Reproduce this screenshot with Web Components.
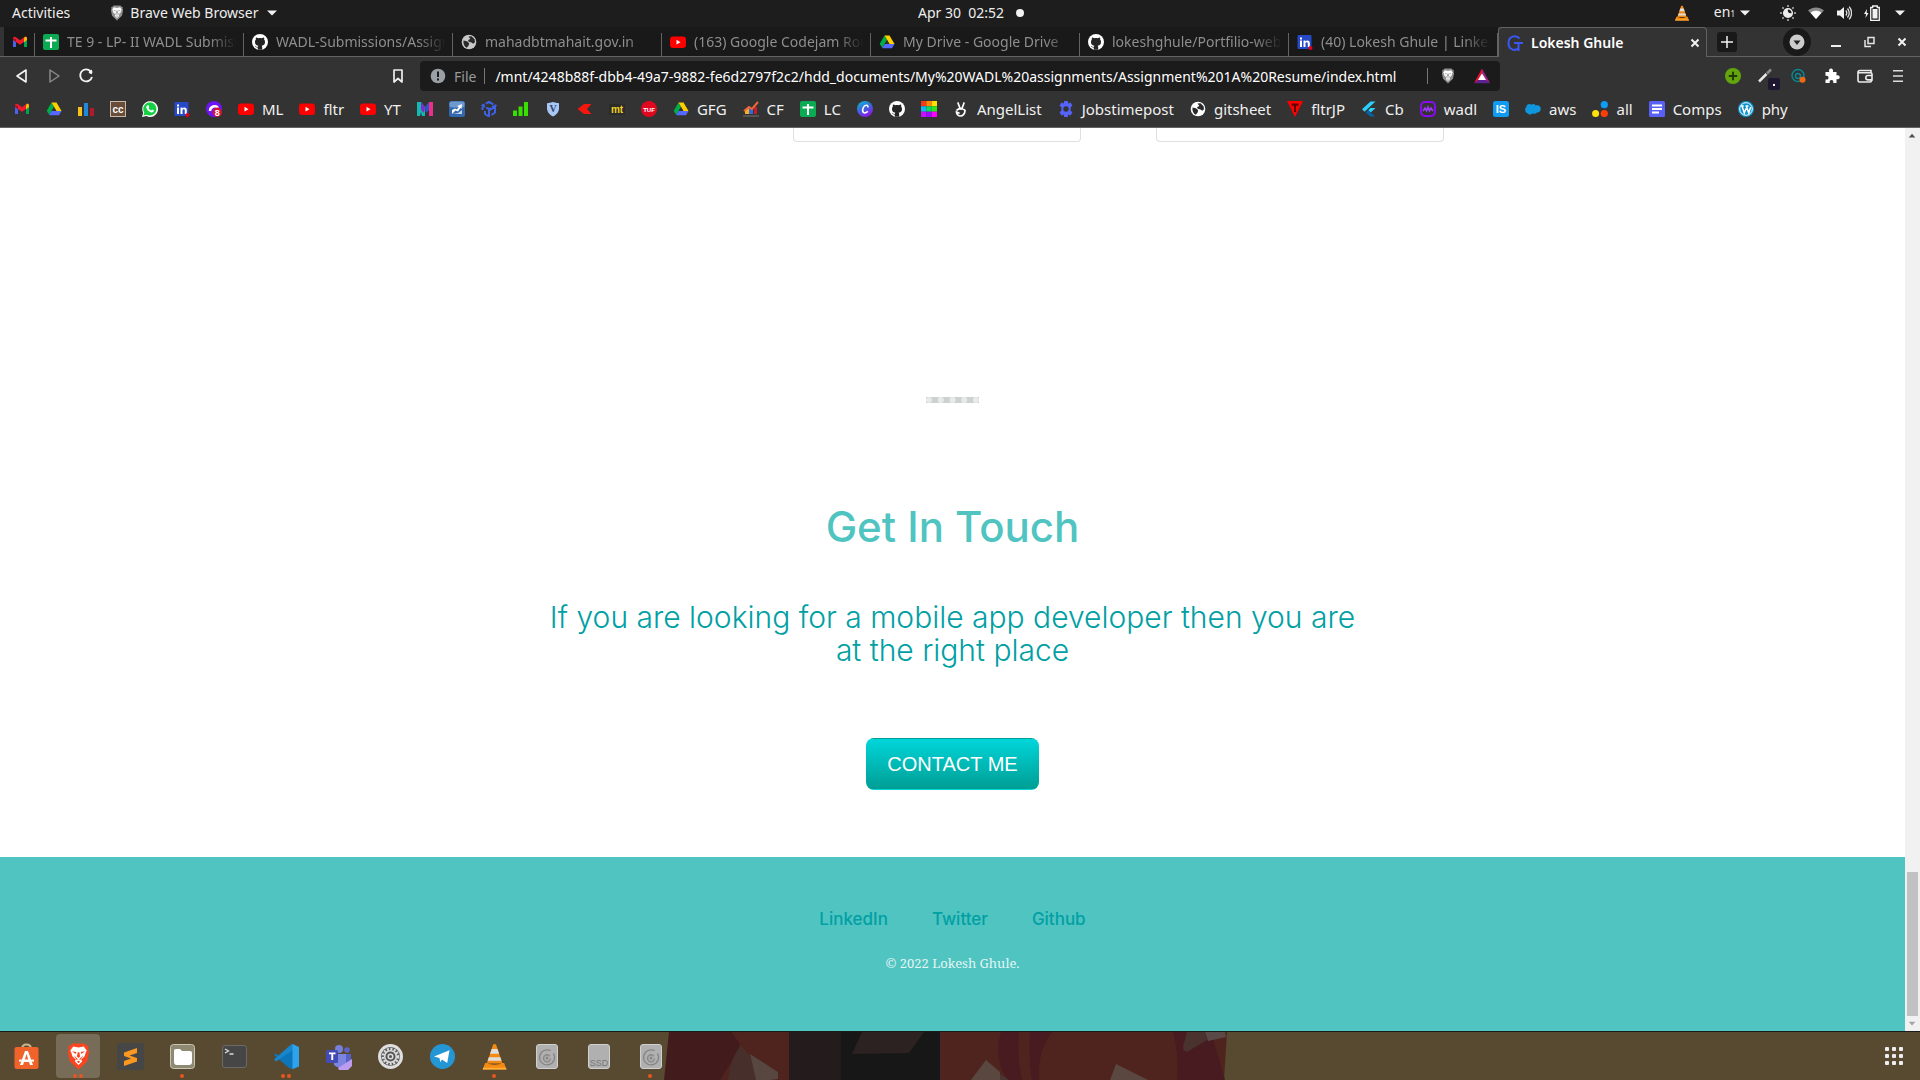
<!DOCTYPE html>
<html lang="en">
<head>
<meta charset="utf-8">
<title>Lokesh Ghule</title>
<style>
html,body{height:100%;margin:0}
body{display:flex;flex-direction:column;overflow:hidden;background:#333;font-family:"Noto Sans","Open Sans",sans-serif}
page-view{flex:1;min-height:0}
</style>
</head>
<body>
<system-bar></system-bar>
<tab-strip>
  <browser-tab icon="gmail" pinned></browser-tab>
  <browser-tab icon="sheets">TE 9 - LP- II WADL Submissions</browser-tab>
  <browser-tab icon="github">WADL-Submissions/Assignments</browser-tab>
  <browser-tab icon="globegray">mahadbtmahait.gov.in</browser-tab>
  <browser-tab icon="youtube">(163) Google Codejam Round</browser-tab>
  <browser-tab icon="drive">My Drive - Google Drive</browser-tab>
  <browser-tab icon="github">lokeshghule/Portfilio-website</browser-tab>
  <browser-tab icon="linkedin">(40) Lokesh Ghule | LinkedIn</browser-tab>
  <browser-tab icon="gee" active>Lokesh Ghule</browser-tab>
</tab-strip>
<tool-bar></tool-bar>
<bookmark-bar>
  <bookmark-item icon="gmail"></bookmark-item>
  <bookmark-item icon="drive"></bookmark-item>
  <bookmark-item icon="bars"></bookmark-item>
  <bookmark-item icon="cc"></bookmark-item>
  <bookmark-item icon="whatsapp"></bookmark-item>
  <bookmark-item icon="linkedin"></bookmark-item>
  <bookmark-item icon="purple"></bookmark-item>
  <bookmark-item icon="youtube">ML</bookmark-item>
  <bookmark-item icon="youtube">fltr</bookmark-item>
  <bookmark-item icon="youtube">YT</bookmark-item>
  <bookmark-item icon="emm"></bookmark-item>
  <bookmark-item icon="trend"></bookmark-item>
  <bookmark-item icon="cube"></bookmark-item>
  <bookmark-item icon="signal"></bookmark-item>
  <bookmark-item icon="shieldv"></bookmark-item>
  <bookmark-item icon="kite"></bookmark-item>
  <bookmark-item icon="mt"></bookmark-item>
  <bookmark-item icon="tuf"></bookmark-item>
  <bookmark-item icon="drive">GFG</bookmark-item>
  <bookmark-item icon="chart">CF</bookmark-item>
  <bookmark-item icon="sheets">LC</bookmark-item>
  <bookmark-item icon="canva"></bookmark-item>
  <bookmark-item icon="github"></bookmark-item>
  <bookmark-item icon="swatch"></bookmark-item>
  <bookmark-item icon="angel">AngelList</bookmark-item>
  <bookmark-item icon="gear">Jobstimepost</bookmark-item>
  <bookmark-item icon="globe">gitsheet</bookmark-item>
  <bookmark-item icon="tee">fltrJP</bookmark-item>
  <bookmark-item icon="flutter">Cb</bookmark-item>
  <bookmark-item icon="wave">wadl</bookmark-item>
  <bookmark-item icon="is"></bookmark-item>
  <bookmark-item icon="cloud">aws</bookmark-item>
  <bookmark-item icon="dots">all</bookmark-item>
  <bookmark-item icon="form">Comps</bookmark-item>
  <bookmark-item icon="wordpress">phy</bookmark-item>
</bookmark-bar>
<page-view></page-view>
<app-dock></app-dock>

<script>
const LION = (body, face) => `<path fill="${body}" d="M4.500 .5h7l1 1.200 1.300.2-.2 2 .5 1.600-1.200 5.300L8 15.600 3.100 10.800 1.900 5.500l.5-1.600-.2-2 1.300-.2z"/><path fill="${face}" d="M5 2.300 8 2.900l3-.6 1.700 2.200-.6 1.300-.6 2-2 1.900.6 1.200L8 12.900 5.900 10.900l.6-1.200-2-1.900-.6-2-.6-1.300z"/><path fill="${body}" d="M4.300 5l2.500.4L6.300 6.600zM11.700 5l-2.500.4.5 1.200zM7.500 5.500h1L8.900 8 8 8.900 7.100 8zM5.200 7.300 7.700 9.500 7 10zM10.800 7.300 8.300 9.500 9 10zM6.900 11 8 10.400l1.100.6L8 11.700z"/>`;
const GLOBE = c => `<circle cx="8" cy="8" r="7.300" fill="${c}"/><path fill="#2a2a2a" d="M2.500 6.500 6 7.300l2.200 2-.6 2.200-1.800 2.300C3.500 12.800 2 10 2.500 6.500zM7.500 2.500l3-.3L13.600 5.200l.4 3-1.800 1.600-1.700-1.300-2.800-.8-.6-1.800 2.300-.8z"/>`;
const CONE = `<path fill="#f58a12" d="M7.200.8h1.600L12.600 12H3.400z"/><path fill="#ddd" d="M6.300 3.600h3.400l1 2.700H5.300zM4.600 8.400h6.800l.7 2.100H3.900z"/><path fill="#f58a12" d="M2.400 11.800h1.400c1 1.300 7.400 1.300 8.400 0h1.400L15 15.600H1z"/><path fill="#ffb03a" d="M1.200 14.600h13.600l.2 1H1z"/>`;
const DISK = `<rect x=".5" y=".5" width="21" height="24" rx="2.500" fill="#b0b0b0" stroke="#d0d0d0"/>`;
const RINGS = `<g fill="none" stroke="#868686" stroke-width="1.300"><path d="M17.500 9.500a7.500 7.500 0 1 1-3-2.800M14.500 14.500a3.500 3.500 0 1 1-.6-2.200"/></g><circle cx="11" cy="14" r="1.500" fill="#868686"/>`;
const T = 'font-family="Liberation Sans,sans-serif" text-anchor="middle"';
const ICONS = {
gmail:`<path fill="#4a62ea" d="M1 4v9h3V6z"/><path fill="#00a651" d="M15 4v9h-3V6z"/><path fill="#f01b2d" d="M1 4.500C1 2.500 3 2.300 4 3.200l4 3 4-3c1-.9 3-.7 3 1.300L12 8 8 10.800 4 8z"/><path fill="#a80f23" d="M1 4.500V6l3 2.200V5z"/><path fill="#fcbc05" d="M12 5l.6-2c1-.7 2.400 0 2.400 1.500V6l-3 2.200z"/>`,
drive:`<path fill="#00ac47" d="M5.500 1.500 8 5.700 3.300 14 .7 9.800z"/><path fill="#ffcf00" d="M5.500 1.500h5l5 8.500h-5z"/><path fill="#5568ff" d="M5.600 10h9.900L13 14.200H3.200z"/><path fill="#333" d="M8 6.300 10 9.800H6z"/>`,
bars:`<rect x="0" y="6" width="4" height="9" fill="#f5c21b"/><rect x="6" y="2" width="4" height="13" fill="#2388d8"/><rect x="12" y="7" width="4" height="8" fill="#b21a2b"/>`,
cc:`<rect x=".5" y=".5" width="15" height="15" fill="#6a4d38" stroke="#cbb7a4"/><text ${T} x="8" y="11.500" font-size="10" font-weight="bold" fill="#fff">cc</text>`,
whatsapp:`<path fill="#fff" d="M0 16 1.200 11.800A7.900 7.900 0 1 1 4.400 15z"/><path fill="#12cf43" d="M1.400 14.600l.9-3A6.600 6.600 0 1 1 4.700 13.800z"/><path fill="#fff" d="M5.300 4.200h1.200l.8 1.900-.7.9c.5 1.100 1.300 1.800 2.500 2.400l.9-1 1.800.9c.2 1.400-.9 2.200-2.100 2.200C7 11.200 4.600 8.800 4.300 6.300c0-.8.300-1.600 1-2.100z"/>`,
linkedin:`<rect x=".5" y="1" width="14" height="14" rx="1" fill="#2649c7"/><path fill="#fff" d="M3 6.500h2V13H3zM3 3.500h2v2H3zM6.500 6.500h1.900v.9c1-1.500 4.400-1.500 4.400 1.600v4h-2V9.500c0-1.600-2.300-1.600-2.300 0V13h-2z"/><circle cx="13.500" cy="14" r="2" fill="#e3001b"/>`,
purple:`<circle cx="8" cy="8" r="8" fill="#6d15f2"/><path d="M4 10c0-5 6-6 8-3" fill="none" stroke="#fff" stroke-width="2.500"/><circle cx="11.300" cy="11.300" r="4.700" fill="#d8122f"/><text ${T} x="11.300" y="14.600" font-size="9" font-weight="bold" fill="#fff">8</text>`,
youtube:`<rect x="0" y="2.500" width="16" height="11.500" rx="3" fill="#f00"/><path fill="#fff" d="M6.500 5.800 10.500 8.200 6.500 10.600z"/>`,
emm:`<path fill="#14b8b2" d="M0 1h4l4 5v9H5l-1-4-1 4H0z"/><path fill="#8129c9" d="M4 1 8 6l-1 6-3-3z"/><path fill="#2f55c9" d="M8 6l4-5v8l-3 3z"/><path fill="#ef2d8b" d="M12 1h4v14h-4z"/>`,
trend:`<rect width="16" height="16" rx="2.500" fill="#3468ad"/><rect x=".5" y=".5" width="15" height="6" rx="2" fill="#6c99d0"/><path fill="#fff" d="M3 13V9l3-1.500 1.800 1 2-2.500-1.600-1L13 3l-.5 5-1.200-1L9 10.500 6.500 9.500z"/><path fill="#fff" opacity=".7" d="M4 13h9V9l-4 3z"/>`,
cube:`<g fill="none" stroke="#3e62e4" stroke-width="2"><path d="M8 .8 14.500 4.500 8 8 1.500 4.500z" stroke-dasharray="5 1.500"/><path d="M1.500 6v3M4 10v3l4 2.500V9.500l6-3.500v5.500L10.500 14"/></g>`,
signal:`<path fill="#38e000" d="M0 9.500h4V15H0zM5.500 5.500h4V15h-4zM11 1h4v14h-4z"/>`,
shieldv:`<path fill="#a9c7f6" d="M2 2.200Q5 2 8 1q3 1 6 1.200v6Q13 13 8 15.500 3 13 2 8.200z"/><text font-family="Liberation Serif,serif" text-anchor="middle" x="8" y="11" font-size="10" font-weight="bold" fill="#31456c">V</text>`,
kite:`<path fill="#f3170d" d="M.5 8 7 3h7.500L10 8l4.500 5H7z"/>`,
mt:`<rect y="3" width="16" height="11" fill="#2b2b2b"/><text ${T} x="8" y="11.500" font-size="10" font-weight="bold" fill="#f2d21f">mt</text>`,
tuf:`<circle cx="8" cy="8" r="8" fill="#e1071f"/><text ${T} x="8" y="10.500" font-size="6" font-weight="bold" fill="#fff">TUF</text>`,
chart:`<path fill="#f3b21d" d="M2 9l4-2v6H2z"/><path fill="#3767d6" d="M6 7h4v6H6z"/><path fill="#c21e2a" d="M11 6h3v7h-3z"/><path d="M1 10 6 6l3 2 6-7" fill="none" stroke="#f0643c" stroke-width="2"/><path stroke="#777" d="M0 15h16"/>`,
sheets:`<rect width="16" height="16" rx="2" fill="#0bab53"/><path fill="#fff" d="M2.500 5.500H7V3h2v2.500h4.500v2H9V14H7V7.500H2.500z"/>`,
canva:`<defs><linearGradient id="a" x1="0" y1="0" x2=".5" y2="1"><stop stop-color="#05c3d2"/><stop offset=".55" stop-color="#3b65dd"/><stop offset="1" stop-color="#8b1be8"/></linearGradient></defs><circle cx="8" cy="8" r="8" fill="url(#a)"/><path d="M10.800 6.600c1-3-3-3.600-4.600.2-1.800 4.200.8 6.800 4.600 3.600" fill="none" stroke="#fff" stroke-width="1.500"/>`,
github:`<circle cx="8" cy="8" r="8" fill="#fff"/><path fill="#242424" d="M5.800 15.700v-2.300c-2 .4-2.500-.9-3-1.600.9 0 1.300 1.200 2.300 1.100l.8-.1.400-1C3.900 11.500 3 10 3 8c0-1 .3-1.700.9-2.400-.2-.7-.2-1.500.1-2.200.9 0 1.600.5 2.200.9 1.100-.3 2.400-.3 3.600 0 .6-.4 1.300-.9 2.200-.9.3.7.3 1.500.1 2.200.6.700.9 1.400.9 2.400 0 2-.9 3.500-3.300 3.800.4.400.5 1 .5 1.600v2.300z"/>`,
swatch:`<path fill="#f33b1c" d="M0 0h5.300v5.300H0z"/><path fill="#f80" d="M5.300 0h5.400v5.300H5.300z"/><path fill="#ffe000" d="M10.700 0H16v5.300h-5.300z"/><path fill="#11b7f5" d="M0 5.300h5.300v5.400H0z"/><path fill="#0bd968" d="M5.300 5.300h5.400v5.400H5.300z"/><path fill="#2fe81c" d="M10.700 5.300H16v5.400h-5.300z"/><path fill="#c610ff" d="M0 10.700h5.300V16H0z"/><path fill="#9a0bff" d="M5.300 10.700h5.400V16H5.300z"/><path fill="#f0f" d="M10.700 10.700H16V16h-5.300z"/>`,
angel:`<path fill="none" stroke="#fff" stroke-width="1.700" stroke-linecap="round" d="M5 2l2.300 6M11 2 8.800 8M4 9c3-2 7-1.500 8 .5 0 3-2 5.500-4.500 5.500C5 15 3.500 13 3.500 11L6 12"/>`,
gear:`<path fill="#5663fb" d="M6.200 0h3.600l.5 2.400 2.300-.8 1.800 3.100L12.600 6.300v3.400l1.800 1.600-1.800 3.100-2.300-.8-.5 2.400H6.200l-.5-2.400-2.300.8-1.800-3.100 1.800-1.600V6.300L1.600 4.700l1.800-3.100 2.300.8z"/><circle cx="8" cy="8" r="2.700" fill="#333"/>`,
globe:GLOBE('#fff'), globegray:GLOBE('#c9c9c9'),
tee:`<path fill="#f00" d="M0 0h16L8 16z"/><path fill="#5c0000" d="M4.500 2.500h7v2.300H9V11H7V4.800H4.500z"/>`,
flutter:`<path fill="#2ad0fb" d="M9.500.5h5L3.600 10.800 1 8.300zM9.600 7h4.900L9.700 11.600 7.200 9.200z"/><path fill="#0a62a6" d="M7.200 9.200 4.800 11.600l4.300 4h5L9.700 11.600z"/>`,
wave:`<rect x="1" y="1" width="14" height="14" rx="4" fill="none" stroke="#8a09f4" stroke-width="2"/><path d="M3 10l2-3 1.500 3L8 6l1.500 4L11 7l2 3" fill="none" stroke="#a43bff" stroke-width="1.500"/>`,
is:`<rect width="16" height="16" rx="2.500" fill="#0f9bf2"/><text ${T} x="8" y="12" font-size="11" font-weight="bold" fill="#fff">IS</text>`,
cloud:`<path fill="#0e97dd" d="M3 12.500C-.5 11.500-.5 7 1.500 6 1 3.500 4.500 2 6.500 3.800 8 2.500 10 3 10.600 4.500c3-1 5.200 1 5.200 3.300 0 2.600-2 3.900-4 3.600-1 1.700-3.300 1.700-4.200.8-1.600 1.800-4 1.500-4.600.3z"/>`,
dots:`<circle cx="12.300" cy="3.700" r="3.600" fill="#0c9cf8"/><circle cx="3.600" cy="12.500" r="3.500" fill="#ffe20a"/><circle cx="12.300" cy="12.500" r="3.600" fill="#ff3d0a"/>`,
form:`<rect width="16" height="16" rx="1.500" fill="#5a60f4"/><path fill="#fff" d="M3 3.500h10v2H3zM3 7h10v2H3zM3 10.500h7v2H3z"/>`,
wordpress:`<circle cx="8" cy="8" r="8" fill="#0a92cc"/><circle cx="8" cy="8" r="6.300" fill="none" stroke="#fff"/><path d="M2.800 5h3M7.500 5h3M4 5l2.300 7L8 7.500M8.300 5l2.500 7 1.800-6" fill="none" stroke="#fff" stroke-width="1.500"/>`,
gee:`<path fill="none" stroke="#3a57f5" stroke-width="2" d="M12.500 3.500C9-.5 1.500 1 1.500 8s6.500 8.500 10.500 5M7 8h9M11.500 8v8"/>`,
lion:LION('#8f8f8f','#fff'),
cone:CONE,
caret:`<path fill="#f2f2f2" d="M3 5.500h10L8 10.500z"/>`,
sun:`<circle cx="8" cy="8" r="4.300" fill="none" stroke="#eee" stroke-width="1.500"/><path fill="#eee" d="M8 3.700a4.300 4.300 0 1 0 4.300 4.300C9 9 7 7 8 3.700z"/><path stroke="#bbb" stroke-width="1.500" stroke-dasharray="2 12" d="M8 0v16M0 8h16"/><path stroke="#bbb" stroke-width="1.500" d="M2.400 2.400l1.200 1.200M12.400 12.400l1.200 1.200M13.600 2.400l-1.200 1.200M3.600 12.400l-1.200 1.200"/>`,
wifi:`<path fill="#8a8a8a" d="M0 5.500c5-4 11-4 16 0L8 14z"/><path fill="#fff" d="M2.600 7.800c3.500-2.600 7.300-2.600 10.800 0L8 14z"/>`,
volume:`<path fill="#f2f2f2" d="M1 5.500h3L8 2v12l-4-3.500H1z"/><path fill="none" stroke="#ddd" stroke-width="1.300" d="M9.800 5.500q2 2.500 0 5M11.500 3.500q3.500 4.500 0 9M13.200 1.700q4.800 6.300 0 12.600"/>`,
battery:`<path fill="#f2f2f2" d="M3 4 0 9h2l-.5 4L4.500 8H2.700zM8.500 4h5v9.500h-5z"/><path fill="none" stroke="#f2f2f2" stroke-width="1.300" d="M6.700 2.500h2V1h4.600v1.500h2v13H6.700z"/>`,
close:`<path stroke="#f2f2f2" stroke-width="2" d="M4.500 4.500l7 7M11.500 4.500l-7 7"/>`,
plus:`<path stroke="#f2f2f2" stroke-width="1.500" d="M8 2v12M2 8h12"/>`,
down:`<circle cx="8" cy="8" r="7.500" fill="#ccc"/><path fill="#222" d="M4.500 6.500h7L8 11z"/>`,
min:`<path fill="#eee" d="M3 11h10v2H3z"/>`,
restore:`<path fill="none" stroke="#e5e5e5" stroke-width="1.500" d="M7 3.500h6v6H7zM4 6v6.500h6"/>`,
back:`<path fill="none" stroke="#f5f5f5" stroke-width="1.600" stroke-linejoin="round" d="M12 2v12L3 8z"/>`,
fwd:`<path fill="none" stroke="#8a8a8a" stroke-width="1.500" stroke-linejoin="round" d="M4 2v12l9-6z"/>`,
reload:`<path fill="none" stroke="#f5f5f5" stroke-width="1.800" d="M12.600 3.300A6 6 0 1 0 14 9"/><path fill="#f5f5f5" d="M10.500 4.500 14 1.500v4.700z"/><circle cx="12.700" cy="4" r="1.800" fill="#f5f5f5"/>`,
mark:`<path fill="none" stroke="#eee" stroke-width="1.700" stroke-linejoin="round" d="M4 2h8v12L8 10.500 4 14z"/>`,
info:`<circle cx="8" cy="8" r="7.300" fill="#9aa0a6"/><path fill="#1b1b1b" d="M7 3.500h2V9H7zM7 10.500h2v2H7z"/>`,
bat:`<path fill="#e3132b" d="M8 .5 8 5 4.500 12.500 0 15z"/><path fill="#9e1f8b" d="M8 .5 16 15l-4.500-2.500L8 5z"/><path fill="#5d2194" d="M0 15.300h16L11.500 12h-7z"/><path fill="#fff" d="M8 5.200 12 12H4z"/>`,
addgreen:`<circle cx="8" cy="8" r="8" fill="#62a50c"/><path stroke="#263b0b" stroke-width="2" d="M8 3.800v8.400M3.800 8h8.400"/>`,
pen:`<path stroke="#e8e8e8" stroke-width="2.500" d="M1 13.500 8.500 6"/><path stroke="#8b8b8b" stroke-width="2.500" d="M9 5.500 13 1.500"/>`,
eye:`<g fill="none" stroke="#0a8691" stroke-width="1.500"><circle cx="7" cy="7.500" r="6"/><circle cx="7" cy="8" r="2.500"/></g><circle cx="11.500" cy="11.800" r="3" fill="#ef6a12"/>`,
puzzle:`<path fill="#fff" d="M1.500 4h3.700C4.500 1.800 5.600.5 7 .5S9.600 1.800 8.900 4H12.500v3.400c2-.7 3.200.4 3.200 1.900s-1.200 2.500-3.200 1.800V15H9.200c.6-2-.3-3-1.700-3s-2.300 1-1.700 3H1.500v-3.600c2 .6 3-.3 3-1.700s-1-2.300-3-1.700z"/>`,
wallet:`<g fill="none" stroke="#ececec" stroke-width="1.600"><path d="M14 5V2.500H3Q1 2.500 1 4.200V12.500Q1 14 2.500 14H13q1.500 0 1.500-1.500V12M1 4.800h12.500q1.500 0 1.500 1.500V7"/><path d="M15 7.500h-4a2.200 2.200 0 0 0 0 4.400h4z"/></g>`,
menu:`<path fill="#ddd" d="M3 2h10v1.600H3zM3 7.200h10v1.600H3zM3 12.400h10V14H3z"/>`,
up:`<path fill="#505050" d="M4 10h7L7.500 6z"/>`, downarrow:`<path fill="#a3a3a3" d="M4 6h7l-3.500 4z"/>`
};
const DOCK = {
store:`<path fill="none" stroke="#c9b48b" stroke-width="2" d="M9 6q0-4.500 4.500-4.500T18 6"/><rect x="1.500" y="4" width="24" height="22" rx="2" fill="#f0642c"/><path fill="#fff" d="M12 8h3l5 14h-3l-1-3h-5l-1 3H7zM11.800 16.800h3.500L13.500 11z"/><path fill="#fff" d="M6 16.600h15v2H6z"/>`,
brave:`<g transform="translate(-.5,-.5) scale(1.750)">${LION('#fb4420','#fff')}</g>`,
sublime:`<rect width="27" height="27" rx="2" fill="#464646"/><path fill="#fb9820" d="M7 9.500 20 5v5l-7.500 2.600L20 15v3.500L7 23v-5l7-2.500L7 13z"/>`,
files:`<rect x="1.500" y="1.500" width="24" height="24" rx="3" fill="#8e8972" stroke="#cac5b2"/><path fill="#fff" d="M5 8q0-2 2-2h4l2 2h8q2 0 2 2v9q0 3-3 3H8q-3 0-3-3z"/>`,
term:`<rect x="1.500" y="2.500" width="24" height="22" rx="2.500" fill="#464646" stroke="#6a6a6a"/><path d="M4 6l3.500 2L4 10M8.500 11h4" fill="none" stroke="#ddd" stroke-width="1.300"/>`,
code:`<path fill="#0d76ba" d="M20 1 6.500 13.500 3 10.500 1 12l15 13 4 1z"/><path fill="#1886cd" d="M1 16.500 18 1.500 20 1v6L3 18.500z"/><path fill="#2ca3ec" d="M19.500 1 26 4v19.500l-6.500 2.800z"/>`,
teams:`<circle cx="14" cy="6" r="4" fill="#7680da"/><circle cx="22" cy="7" r="2.800" fill="#5b63c4"/><path fill="#5960c6" d="M17 11h9v9q-2 5-8 3z"/><path fill="#7c86e1" d="M9 11h12v12q-5 5-12-1z"/><rect x="1" y="7" width="12" height="13" rx="1.500" fill="#454bb5"/><path fill="#fff" d="M4 9.500h6.500v1.800H8.200V17H6.300v-5.700H4z"/><path fill="#bd9cf0" d="M13 25 27 16v7l-4 4H14z"/>`,
settings:`<circle cx="13.500" cy="13.500" r="12.500" fill="#dedede"/><circle cx="13.500" cy="13.500" r="9.500" fill="#5b5b5b"/><circle cx="13.500" cy="13.500" r="7.500" fill="none" stroke="#ddd" stroke-width="2.500" stroke-dasharray="2 1.500"/><circle cx="13.500" cy="13.500" r="5.800" fill="#555" stroke="#ddd" stroke-width="1.500"/><circle cx="13.500" cy="13.500" r="2.300" fill="#555" stroke="#ddd" stroke-width="1.500"/>`,
telegram:`<circle cx="13.500" cy="13.500" r="12.500" fill="#2496d4"/><path fill="#fff" d="M5 13.600 20.500 7.300 18.200 20l-5.200-3.500-1.700 2.700-.8-4.200z"/>`,
vlc:`<g transform="scale(1.700)">${CONE}</g>`,
disk:`<g transform="translate(3,1)">${DISK}${RINGS}</g>`,
ssd:`<g transform="translate(3,1)">${DISK}<text ${T} x="11" y="22" font-size="9" fill="#777">SSD</text></g>`
};

function define(name, css, html){
  customElements.define(name, class extends HTMLElement{
    constructor(){
      super();
      const t=document.createElement('template');
      t.innerHTML=`<style>:host,*{box-sizing:border-box}button{font:inherit;color:inherit;background:none;border:0;padding:0;margin:0;display:inline-flex;align-items:center;justify-content:center}${css}</style>${typeof html==='function'?html(this):html}`;
      this.attachShadow({mode:'open'}).append(t.content.cloneNode(true));
    }
  });
}
const a = (el,n) => el.getAttribute(n);

define('ui-icon', ':host{display:block;width:var(--icon,16px);height:var(--icon,16px);flex:none}svg{display:block;width:100%;height:100%}',
  el => DOCK[a(el,'name')] ? `<svg viewBox="0 0 27 27" aria-hidden="true">${DOCK[a(el,'name')]}</svg>` : `<svg viewBox="0 0 16 16" aria-hidden="true">${ICONS[a(el,'name')]}</svg>`);

define('system-bar', `
:host{display:grid;grid-template-columns:1fr auto 1fr;align-items:center;height:27px;flex:none;background:#1d1d1d;color:#eee;font-size:14px;line-height:20px;white-space:pre;padding-bottom:1px}
.left,.right,.mid{display:flex;align-items:center}
.left{padding-left:12px;gap:39px}.app{gap:5px}
.mid{gap:12px;padding-left:22px}.dot{width:8px;height:8px;border-radius:50%;background:#f2f2f2}
.right{justify-content:flex-end;padding-right:12px;gap:12px}
.lang{gap:2px;margin:0 15px 0 12px}.lang small{font-size:8px}`,
`<div class="left"><button>Activities</button><button class="app"><ui-icon name="lion"></ui-icon>Brave Web Browser<ui-icon name="caret"></ui-icon></button></div>
<div class="mid"><time>Apr 30  02:52</time><span class="dot"></span></div>
<div class="right"><ui-icon name="cone"></ui-icon><button class="lang"><span>en<small>1</small></span><ui-icon name="caret"></ui-icon></button><ui-icon name="sun"></ui-icon><ui-icon name="wifi"></ui-icon><ui-icon name="volume"></ui-icon><ui-icon name="battery"></ui-icon><ui-icon name="caret"></ui-icon></div>`);

define('tab-strip', `
:host{display:flex;height:30px;flex:none;background:#333;padding-left:4px;box-shadow:inset 0 -1px #636363}
.tabs{display:flex;flex:0 1 1703px;min-width:0}
.new{width:20px;height:20px;border-radius:3px;background:#191919;margin:5px 0 0 10px}
.win{margin-left:auto;display:flex;align-items:center;padding-right:10px;gap:17px;height:29px}
.circle{width:28px;height:28px;border-radius:50%;background:#191919}`,
`<div class="tabs" role="tablist"><slot></slot></div><button class="new" aria-label="New tab"><ui-icon name="plus"></ui-icon></button>
<div class="win"><button class="circle" aria-label="Search tabs"><ui-icon name="down"></ui-icon></button><button aria-label="Minimize"><ui-icon name="min"></ui-icon></button><button aria-label="Restore"><ui-icon name="restore"></ui-icon></button><button aria-label="Close"><ui-icon name="close"></ui-icon></button></div>`);

define('browser-tab', `
:host{display:flex;flex:0 1 209px;min-width:0;height:29px;background:#191919;color:#8e8e8e;font-size:14px;line-height:20px}
:host([pinned]){flex:none;width:31px}
:host([active]){background:#333;color:#fff;font-weight:600;height:30px;border:1px solid #636363;border-bottom:0;border-radius:4px 4px 0 0}
button.tab{flex:1;min-width:0;justify-content:flex-start;gap:8px;padding:0 6px 0 8px}
:host(:not([active])) button.tab{border-right:1px solid #636363;margin-top:6px;padding-bottom:5px}
span{flex:1;min-width:0;text-align:left;white-space:nowrap;overflow:hidden}
:host(:not([active])) span{-webkit-mask-image:linear-gradient(90deg,#000 calc(100% - 28px),transparent)}
:host([pinned]) span,:host(:not([active])) .x{display:none}
.x{margin-right:3px}`,
el=>`<button class="tab" role="tab"><ui-icon name="${a(el,'icon')}"></ui-icon><span><slot></slot></span></button><button class="x" aria-label="Close tab"><ui-icon name="close"></ui-icon></button>`);

define('tool-bar', `
:host{display:grid;grid-template-columns:1fr 1080px 1fr;align-items:center;height:38px;flex:none;background:#333;color:#9a9a9a;font-size:14px}
.nav{display:flex;gap:16px;padding:0 14px}.nav :last-child{margin-left:auto}
.addr{display:flex;align-items:center;height:30px;border-radius:4px;background:#1b1b1b;padding:0 10px;gap:8px}
.addr i{width:1px;height:16px;background:#777}
input{flex:1;min-width:0;border:0;outline:0;background:none;color:#fff;font:inherit;padding:0 0 0 2px}
.shields{margin:0 10px 0 4px}
.ext{display:flex;justify-content:flex-end;padding-right:14px;gap:17px}
.pen{position:relative}.pen b{position:absolute;left:10px;top:10px;width:12px;height:12px;border-radius:2px;background:#1d1830}
.pen b::after{content:"";position:absolute;left:5px;top:6px;width:2px;height:2px;background:#fff}`,
`<div class="nav"><button aria-label="Back"><ui-icon name="back"></ui-icon></button><button aria-label="Forward"><ui-icon name="fwd"></ui-icon></button><button aria-label="Reload"><ui-icon name="reload"></ui-icon></button><button aria-label="Bookmark"><ui-icon name="mark"></ui-icon></button></div>
<div class="addr"><ui-icon name="info"></ui-icon><label for="url">File</label><i></i><input id="url" value="/mnt/4248b88f-dbb4-49a7-9882-fe6d2797f2c2/hdd_documents/My%20WADL%20assignments/Assignment%201A%20Resume/index.html"><i></i><button class="shields" aria-label="Shields"><ui-icon name="lion"></ui-icon></button><button aria-label="Rewards"><ui-icon name="bat"></ui-icon></button></div>
<div class="ext"><button aria-label="Add"><ui-icon name="addgreen"></ui-icon></button><button class="pen" aria-label="Picker"><ui-icon name="pen"></ui-icon><b></b></button><button aria-label="Viewer"><ui-icon name="eye"></ui-icon></button><button aria-label="Extensions"><ui-icon name="puzzle"></ui-icon></button><button aria-label="Wallet"><ui-icon name="wallet"></ui-icon></button><button aria-label="Menu"><ui-icon name="menu"></ui-icon></button></div>`);

define('bookmark-bar', `:host{display:flex;align-items:center;gap:16px;height:33px;flex:none;padding:0 14px 5px;background:#333;border-bottom:1px solid #636363;overflow:hidden}`, `<slot></slot>`);
define('bookmark-item', `:host{display:block;flex:none;color:#f0f0f0;font-size:15px;line-height:20px}
a{display:flex;align-items:center;gap:8px;color:inherit;text-decoration:none;white-space:nowrap}`,
el=>`<a href="#"><ui-icon name="${a(el,'icon')}"></ui-icon>${el.textContent.trim()?'<span><slot></slot></span>':''}</a>`);

define('page-view', `
:host{display:flex;background:#fff;overflow:hidden;min-height:0}
main{flex:1;min-width:0;display:flex;flex-direction:column;font-family:Inter,sans-serif;text-align:center}
.cards{display:grid;grid-template-columns:repeat(3,288px);gap:75px;justify-content:center;padding-right:31px}
.card{height:14px;border:1px solid #dfdfdf;border-top:0;border-radius:0 0 4px 4px}
.card:first-child{visibility:hidden}
hr{width:53px;height:6px;margin:255px auto 97px;border:0;border-top:6px dotted #e6ecec;background:#cdd1d0}
h2{margin:0;color:#50c4c1;font-size:42px;line-height:54px;font-weight:500}
p.lead{margin:47px auto 0;width:830px;color:#00a0a4;font-size:30px;line-height:33px;font-weight:300}
.cta{margin:71px auto 0;padding:14px 20px;border:1px solid transparent;border-radius:8px;background:linear-gradient(#00d6da,#009e94);color:#fff;font:20px/22px "Liberation Sans",sans-serif}
footer{margin-top:auto;height:174px;background:#50c4c1;padding-top:50px}
nav{display:flex;justify-content:center;gap:44px}
nav a{color:#00a0a4;text-decoration:none;font-size:17px;line-height:24px;font-weight:500}
footer p{margin:20px 0 0;color:#e3f5f4;font:13px/24px "Noto Serif","Liberation Serif",serif}
.scroll{width:15px;background:#f1f1f1;display:flex;flex-direction:column;justify-content:space-between;align-items:center}
.thumb{width:11px;height:144px;background:#c1c1c1;margin-top:auto}
ui-icon{--icon:15px}`,
`<main><div class="cards"><div class="card"></div><div class="card"></div><div class="card"></div></div><hr>
<h2>Get In Touch</h2><p class="lead">If you are looking for a mobile app developer then you are at the right place</p>
<button class="cta">CONTACT ME</button>
<footer><nav><a href="#">LinkedIn</a><a href="#">Twitter</a><a href="#">Github</a></nav><p>© 2022 Lokesh Ghule.</p></footer></main>
<div class="scroll"><ui-icon name="up"></ui-icon><div class="thumb"></div><ui-icon name="downarrow"></ui-icon></div>`);

const apps=[['store',0],['brave',2,1],['sublime',0],['files',1],['term',0],['code',2],['teams',0],['settings',0],['telegram',0],['vlc',1],['disk',0],['ssd',0],['disk',1]];
define('app-dock', `
:host{display:flex;position:relative;height:49px;flex:none;background:#584a31;border-top:1px solid #1a1a1a;align-items:center;padding:0 17px 0 4px;--icon:27px}
.wall{position:absolute;left:660px;top:0;width:600px;height:48px}
.apps{display:flex;gap:8px;position:relative}
.app{position:relative;width:44px;height:44px;border-radius:4px}
.on{background:#776c57}
.run{position:absolute;left:0;right:0;bottom:0;display:flex;gap:2px;justify-content:center}
.run i{width:4px;height:4px;border-radius:50%;background:#e95420}
.grid{margin-left:auto;display:grid;grid-template-columns:repeat(3,4px);gap:3px;position:relative}
.grid i{width:4px;height:4px;border-radius:1px;background:#eee}`,
`<svg class="wall" viewBox="0 0 600 48" aria-hidden="true"><path fill="#421b1c" d="M9 0h63L81 12 67 48H4z"/><path fill="#4f241f" d="M72 0h57v48H60l21-34z"/><path fill="#47302b" d="M81 14 90 24l6 24H68q3-24 13-34z"/><path fill="#574740" d="M90 22l28 18v7l-8 1H96z"/><path fill="#241c1c" d="M129 0h52v48h-52z"/><path fill="#171717" d="M181 0h99v48H181z"/><path fill="#2b2221" d="M202 0h62l-15 21-57 1z"/><path fill="#4f241f" d="M280 0h287l-3 48H280z"/><path fill="#471b1f" d="M341 0h18q-2 25 3 48h-15Q333 25 341 0zM370 0h22q-15 20-13 48h-7Q368 25 370 0zM513 0h38l14 48h-48q2-25-4-48z"/><path fill="#594740" d="M326 28 340 40v8h-29z"/><path fill="#493633" d="M340 42l9 6h-9z"/><path fill="#594740" d="M456 32l32 16h-38z"/><path fill="#4a322f" d="M527 0h18l2 8-20 12q-6-2-3-9z"/><path fill="#5a4946" d="M545 0h20l1 5-18 4z"/></svg>
<div class="apps">${apps.map(([n,d,on])=>`<button class="app${on?' on':''}" aria-label="${n}"><ui-icon name="${n}"></ui-icon><span class="run">${'<i></i>'.repeat(d)}</span></button>`).join('')}</div>
<button class="grid" aria-label="Show applications">${'<i></i>'.repeat(9)}</button>`);
</script>
</body>
</html>
